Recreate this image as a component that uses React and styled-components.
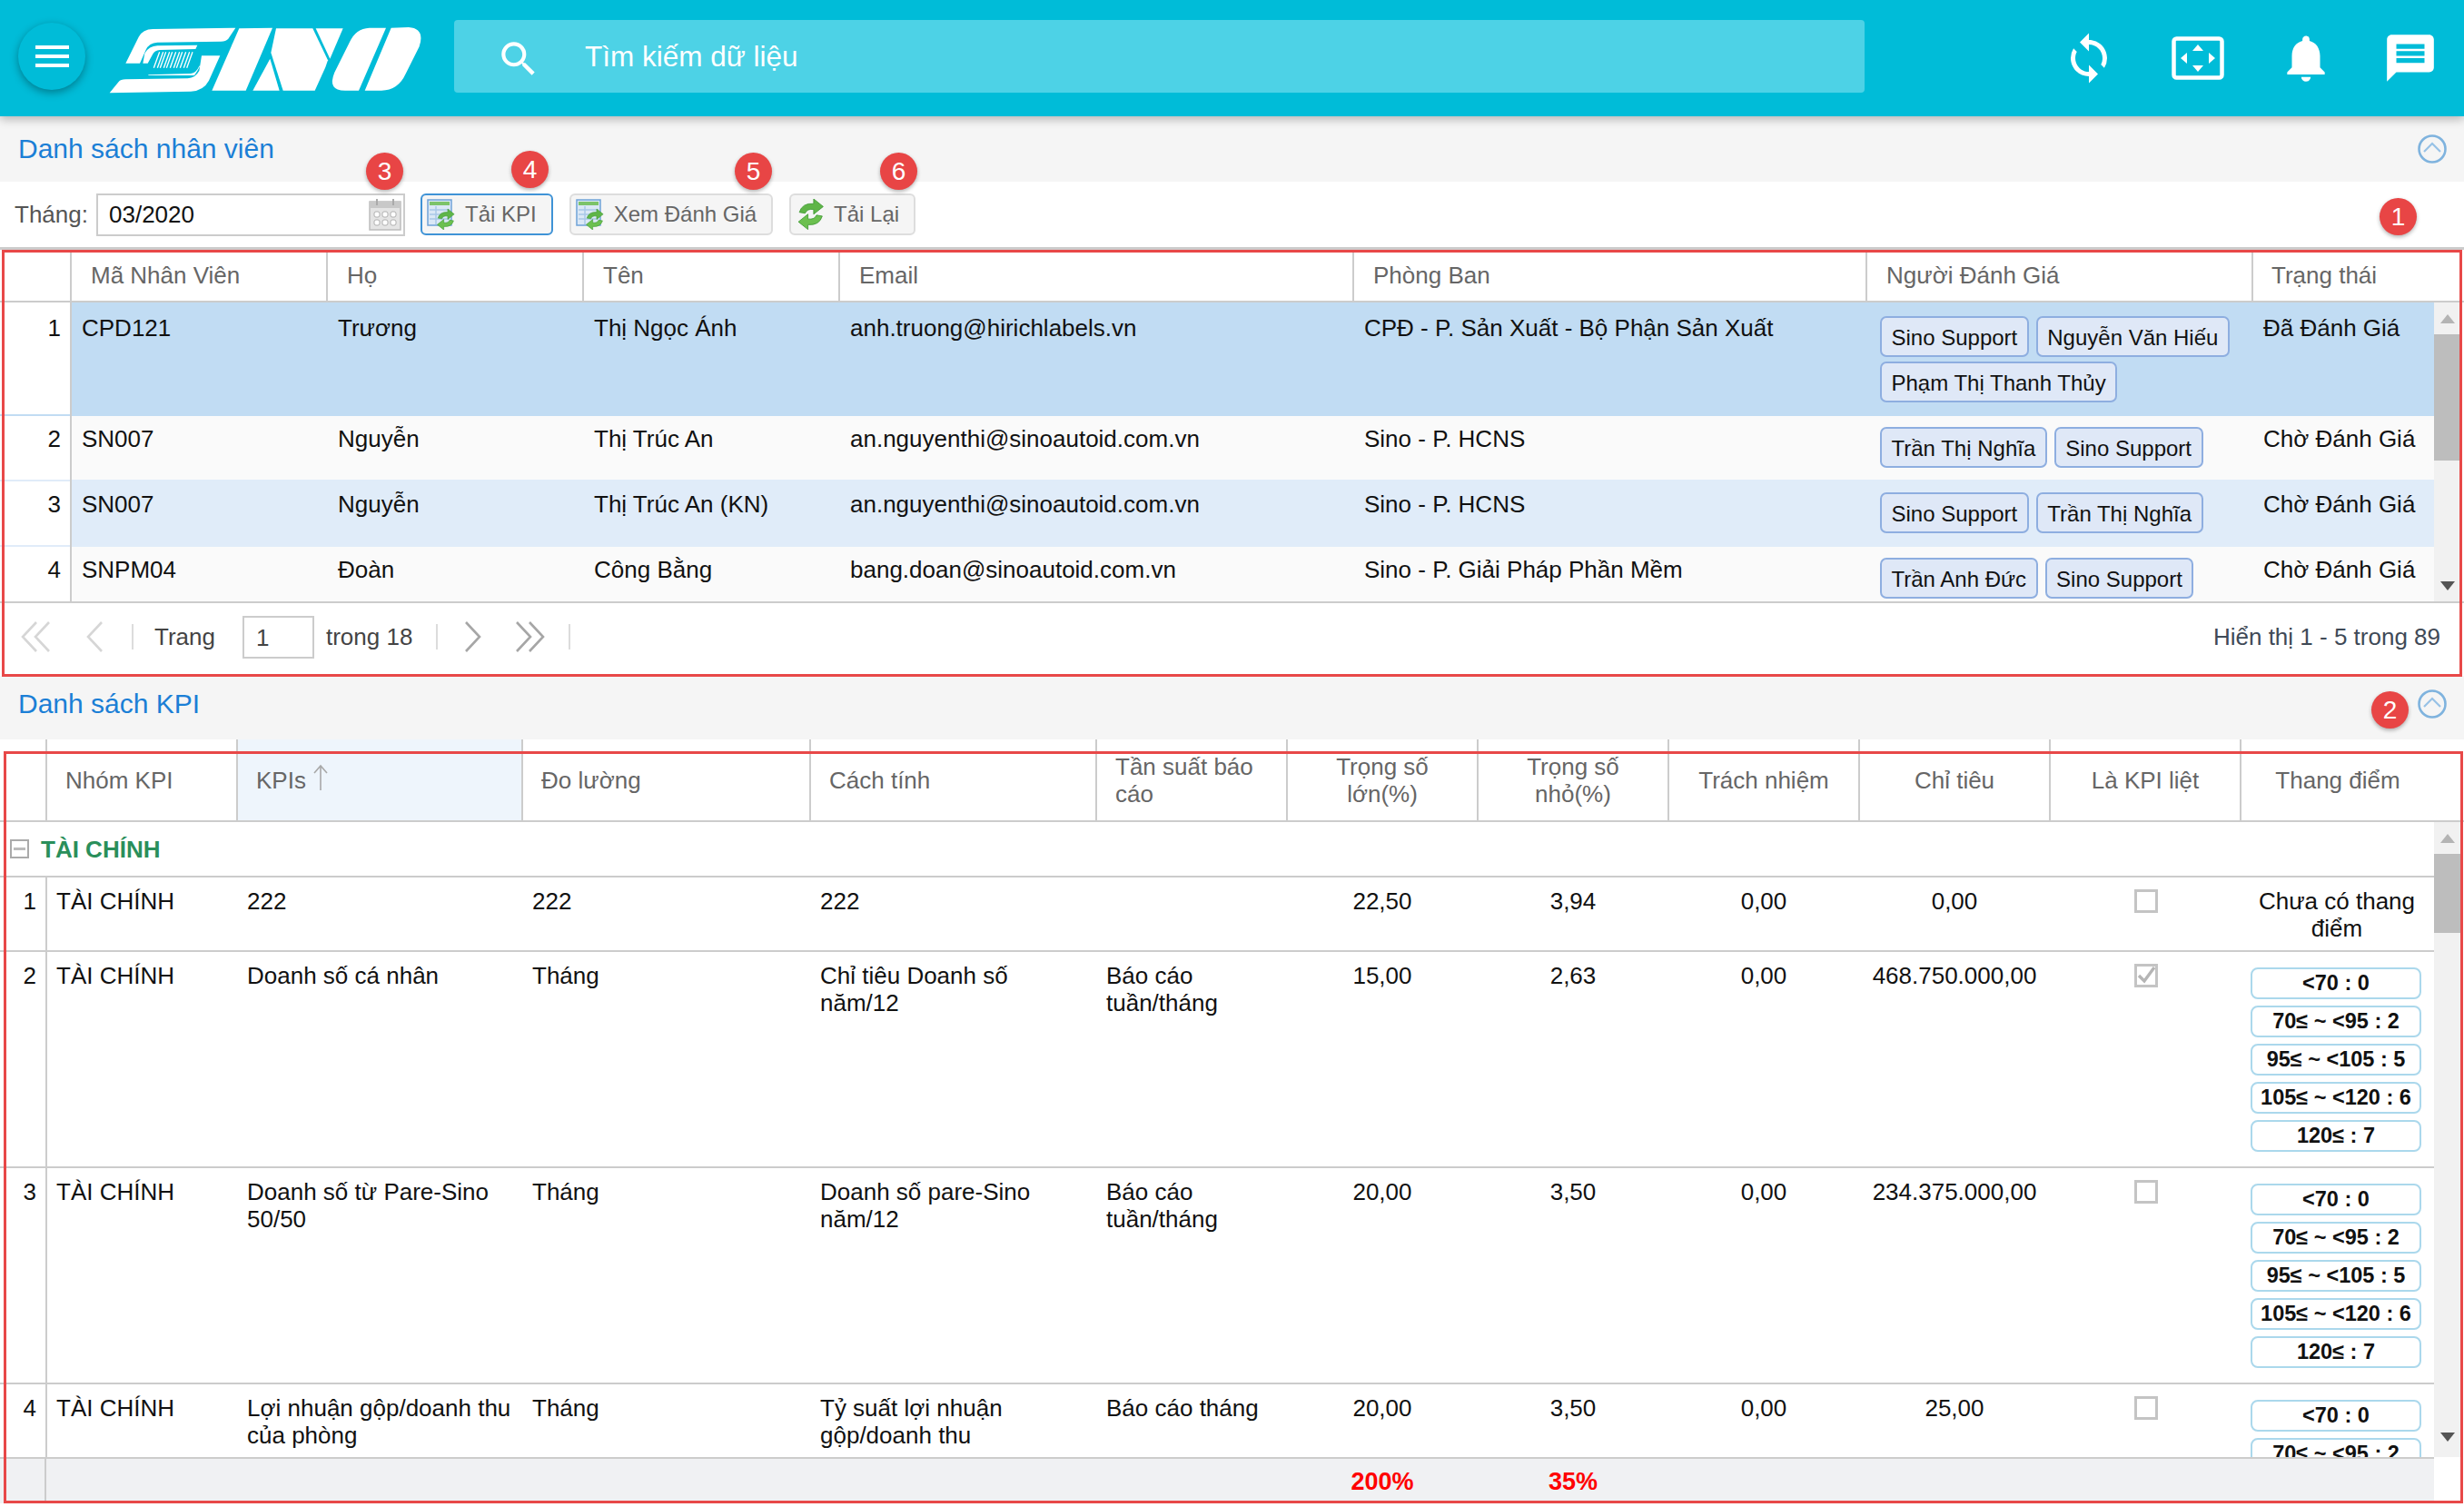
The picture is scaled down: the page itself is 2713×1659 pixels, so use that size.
import React from 'react';
import styled, { createGlobalStyle } from 'styled-components';
import { MdSync, MdNotifications, MdMessage, MdSearch } from 'react-icons/md';

const employees = [
  { no: 1, code: 'CPD121', last: 'Trương', first: 'Thị Ngọc Ánh', email: 'anh.truong@hirichlabels.vn', dept: 'CPĐ - P. Sản Xuất - Bộ Phận Sản Xuất', raters: ['Sino Support', 'Nguyễn Văn Hiếu', 'Phạm Thị Thanh Thủy'], status: 'Đã Đánh Giá', h: 125, pad: 15, bg: '#c1dcf3', textTop: 13, edge: 'inset 0 -2px 0 #c1dcf3' },
  { no: 2, code: 'SN007', last: 'Nguyễn', first: 'Thị Trúc An', email: 'an.nguyenthi@sinoautoid.com.vn', dept: 'Sino - P. HCNS', raters: ['Trần Thị Nghĩa', 'Sino Support'], status: 'Chờ Đánh Giá', h: 70, pad: 12, bg: '#fafafa', textTop: 10, edge: 'none' },
  { no: 3, code: 'SN007', last: 'Nguyễn', first: 'Thị Trúc An (KN)', email: 'an.nguyenthi@sinoautoid.com.vn', dept: 'Sino - P. HCNS', raters: ['Sino Support', 'Trần Thị Nghĩa'], status: 'Chờ Đánh Giá', h: 74, pad: 14, bg: '#e0ecf9', textTop: 12, edge: 'inset 0 2px 0 #e0ecf9, inset 0 -2px 0 #e0ecf9' },
  { no: 4, code: 'SNPM04', last: 'Đoàn', first: 'Công Bằng', email: 'bang.doan@sinoautoid.com.vn', dept: 'Sino - P. Giải Pháp Phần Mềm', raters: ['Trần Anh Đức', 'Sino Support'], status: 'Chờ Đánh Giá', h: 70, pad: 12, bg: '#fafafa', textTop: 10, edge: 'none' },
];

const scale = ['<70 : 0', '70≤ ~ <95 : 2', '95≤ ~ <105 : 5', '105≤ ~ <120 : 6', '120≤ : 7'];

const kpis = [
  { no: 1, kpi: '222', unit: '222', calc: '222', freq: '', big: '22,50', small: '3,94', duty: '0,00', target: '0,00', checked: false, h: 82, pills: null },
  { no: 2, kpi: 'Doanh số cá nhân', unit: 'Tháng', calc: 'Chỉ tiêu Doanh số năm/12', freq: 'Báo cáo tuần/tháng', big: '15,00', small: '2,63', duty: '0,00', target: '468.750.000,00', checked: true, h: 238, pills: scale },
  { no: 3, kpi: 'Doanh số từ Pare-Sino 50/50', unit: 'Tháng', calc: 'Doanh số pare-Sino năm/12', freq: 'Báo cáo tuần/tháng', big: '20,00', small: '3,50', duty: '0,00', target: '234.375.000,00', checked: false, h: 238, pills: scale },
  { no: 4, kpi: 'Lợi nhuận gộp/doanh thu của phòng', unit: 'Tháng', calc: 'Tỷ suất lợi nhuận gộp/doanh thu', freq: 'Báo cáo tháng', big: '20,00', small: '3,50', duty: '0,00', target: '25,00', checked: false, h: 200, pills: scale },
];

function Logo() {
  return (
    <LogoSvg viewBox="330 40 1035 225">
      <g fill="#fff">
        <path d="M385 165 L428 78 Q442 52 475 52 L748 48 L724 84 Q716 93 700 93 L490 96 Q462 98 452 120 L432 165 Z" />
        <path d="M448 132 Q462 108 490 107 L622 105 L616 118 L498 121 Q480 122 474 136 L458 165 L442 165 Z" />
        <path d="M458 203 L600 199 Q618 197 628 174 L632 172 L622 190 L612 205 L462 205 Z" />
        <path d="M636 140 L697 140 L660 222 Q642 256 600 258 L332 263 L362 226 Q368 218 385 218 L590 215 Q616 213 628 190 Z" />
        <path d="M760 50 L870 48 L782 255 L670 255 Z" />
        <path d="M882 50 L1003 50 L1053 155 L1045 178 L1010 255 L905 255 L865 130 Z" />
        <path d="M1013 50 L1103 50 L1060 150 Z" />
        <path d="M805 255 L862 150 L893 255 Z" />
        <path d="M1245 48 L1190 48 Q1145 50 1125 95 L1075 195 Q1050 255 1110 255 L1155 255 Z" />
        <path d="M1262 48 L1320 46 Q1375 50 1355 110 L1310 200 Q1285 255 1230 255 L1175 255 Z" />
      </g>
      <g stroke="#fff" strokeWidth="4">
        <path d="M497 128 L478 180M509 128 L490 180M518 128 L499 180M530 128 L511 180M539 128 L520 180M551 128 L532 180M563 128 L544 180M572 128 L553 180M584 128 L565 180M596 128 L577 180M606 128 L587 180" />
      </g>
    </LogoSvg>
  );
}

function FullscreenIcon() {
  return (
    <svg width="58" height="48" viewBox="0 0 58 48">
      <rect x="2.5" y="2.5" width="53" height="43" rx="3" fill="none" stroke="#fff" strokeWidth="4.5" />
      <path d="M29 9 L35 16 L23 16 Z M29 39 L35 32 L23 32 Z M10 24 L17 18 L17 30 Z M48 24 L41 18 L41 30 Z" fill="#fff" />
    </svg>
  );
}

function CalendarIcon() {
  return (
    <svg width="36" height="36" viewBox="0 0 36 36">
      <rect x="1" y="4" width="34" height="31" fill="#e4e4e4" stroke="#bdbdbd" strokeWidth="1.5" />
      <rect x="1" y="4" width="34" height="7" fill="#c8c8c8" />
      <path d="M9 1 V8 M27 1 V8" stroke="#aaa" strokeWidth="2" />
      <g fill="#fff" stroke="#b0b0b0">
        {[6, 15, 24].map((x) => [15, 24].map((y) => <rect key={`${x}-${y}`} x={x} y={y} width="6" height="6" rx="2" />))}
      </g>
    </svg>
  );
}

function GreenArrows({ x = 0, y = 0, s = 1 }) {
  return (
    <g transform={`translate(${x} ${y}) scale(${s})`}>
      <path d="M3 14 Q6 4 18 5 L18 0 L28 8 L18 16 L18 11 Q11 10 9 15 Z" fill="#5fb548" stroke="#3f9a34" strokeWidth="0.8" />
      <path d="M27 18 Q24 28 12 27 L12 32 L2 24 L12 16 L12 21 Q19 22 21 17 Z" fill="#6cc04f" stroke="#3f9a34" strokeWidth="0.8" />
    </g>
  );
}

function TableIcon() {
  return (
    <svg width="34" height="34" viewBox="0 0 34 34">
      <rect x="1" y="1" width="26" height="28" fill="#dbe8f6" stroke="#6fa3d8" strokeWidth="1.5" />
      <rect x="3" y="3" width="22" height="4" fill="#7cc36a" />
      <path d="M3 12 H25 M3 17 H25 M3 22 H25 M10 8 V28" stroke="#a9c8e8" strokeWidth="1.5" />
      <GreenArrows x={10} y={11} s={0.72} />
    </svg>
  );
}

function ReloadIcon() {
  return (
    <svg width="34" height="34" viewBox="0 0 34 34">
      <GreenArrows x={1} y={0} s={1.05} />
    </svg>
  );
}

function CollapseIcon() {
  return (
    <svg width="32" height="32" viewBox="0 0 32 32">
      <circle cx="16" cy="16" r="14.5" fill="#f5f5f5" stroke="#7fb3de" strokeWidth="2.6" />
      <path d="M7 19 L16 10 L25 19" fill="none" stroke="#98c2e6" strokeWidth="2.2" />
    </svg>
  );
}

function Chevron({ dir, double, dark }) {
  const color = dark ? '#a6a6a6' : '#d6d6d6';
  const flip = dir === 'left' ? 'scale(-1 1) translate(-34 0)' : '';
  return (
    <svg width={double ? 34 : 20} height="34" viewBox={double ? '0 0 34 34' : '0 0 20 34'}>
      <g transform={double ? flip : dir === 'left' ? 'scale(-1 1) translate(-20 0)' : ''} fill="none" stroke={color} strokeWidth="2.6">
        <path d="M2 1 L17 17 L2 33" />
        {double && <path d="M16 1 L31 17 L16 33" />}
      </g>
    </svg>
  );
}

function Scrollbar({ thumb, last }) {
  return (
    <Track>
      <Arrow $up>
        <svg width="16" height="10" viewBox="0 0 16 10"><path d="M8 0 L16 10 L0 10 Z" fill="#b4b4b4" /></svg>
      </Arrow>
      <Thumb $h={thumb} />
      <TrackGap />
      <Arrow $h={last}>
        <svg width="16" height="10" viewBox="0 0 16 10"><path d="M8 10 L16 0 L0 0 Z" fill="#555" /></svg>
      </Arrow>
    </Track>
  );
}

function Tick({ checked }) {
  return (
    <CheckBox>
      {checked && (
        <svg width="20" height="20" viewBox="0 0 20 20"><path d="M2 10 L8 16 L19 1" fill="none" stroke="#b5b5b5" strokeWidth="3.4" /></svg>
      )}
    </CheckBox>
  );
}

function EmployeePanel() {
  return (
    <Panel>
      <EmpHead>
        <HeadCell />
        {['Mã Nhân Viên', 'Họ', 'Tên', 'Email', 'Phòng Ban', 'Người Đánh Giá', 'Trạng thái'].map((t) => <HeadCell key={t}>{t}</HeadCell>)}
      </EmpHead>
      <GridBody $h={329}>
        <RowClip>
          {employees.map((e) => (
            <EmpRow key={e.no} $h={e.h} $bg={e.bg}>
              <NumCell $top={e.textTop} $right={10} $edge={e.edge}>{e.no}</NumCell>
              <EmpCell $top={e.textTop}>{e.code}</EmpCell>
              <EmpCell $top={e.textTop}>{e.last}</EmpCell>
              <EmpCell $top={e.textTop}>{e.first}</EmpCell>
              <EmpCell $top={e.textTop}>{e.email}</EmpCell>
              <EmpCell $top={e.textTop}>{e.dept}</EmpCell>
              <TagCell $top={e.pad}>
                {e.raters.map((r) => <Tag key={r}>{r}</Tag>)}
              </TagCell>
              <EmpCell $top={e.textTop}>{e.status}</EmpCell>
            </EmpRow>
          ))}
        </RowClip>
        <Scrollbar thumb={139} last={35} />
      </GridBody>
      <Pager>
        <PagerBtn $w={79} $pad={23}><Chevron dir="left" double /></PagerBtn>
        <PagerBtn $w={35}><Chevron dir="left" /></PagerBtn>
        <PagerSep />
        <PagerText $left={23}>Trang</PagerText>
        <PageInput>1</PageInput>
        <PagerText $left={13}>trong 18</PagerText>
        <PagerSep $left={26} />
        <PagerBtn $w={49}><Chevron dir="right" dark /></PagerBtn>
        <PagerBtn $w={70}><Chevron dir="right" double dark /></PagerBtn>
        <PagerSep $left={25} />
        <PagerInfo>Hiển thị 1 - 5 trong 89</PagerInfo>
      </Pager>
      <FrameOne />
    </Panel>
  );
}

function KpiPanel() {
  return (
    <KpiWrap>
      <KpiHead>
        <KpiHeadCell />
        <KpiHeadCell>Nhóm KPI</KpiHeadCell>
        <KpiHeadCell $sorted>
          KPIs
          <SortArrow viewBox="0 0 16 30" width="16" height="30"><path d="M8 29 V2 M1 10 L8 2 L15 10" fill="none" stroke="#a8a8a8" strokeWidth="1.6" /></SortArrow>
        </KpiHeadCell>
        <KpiHeadCell>Đo lường</KpiHeadCell>
        <KpiHeadCell>Cách tính</KpiHeadCell>
        <KpiHeadCell>Tần suất báo cáo</KpiHeadCell>
        <KpiHeadCell $center>Trọng số lớn(%)</KpiHeadCell>
        <KpiHeadCell $center>Trọng số nhỏ(%)</KpiHeadCell>
        <KpiHeadCell $center>Trách nhiệm</KpiHeadCell>
        <KpiHeadCell $center>Chỉ tiêu</KpiHeadCell>
        <KpiHeadCell $center>Là KPI liệt</KpiHeadCell>
        <KpiHeadCell $center>Thang điểm</KpiHeadCell>
      </KpiHead>
      <GridBody $h={699}>
        <RowClip>
          <GroupRow>
            <MinusBox />
            <GroupName>TÀI CHÍNH</GroupName>
          </GroupRow>
          {kpis.map((k) => (
            <KpiRow key={k.no} $h={k.h}>
              <NumCell $top={11} $right={10}>{k.no}</NumCell>
              <KpiCell>TÀI CHÍNH</KpiCell>
              <KpiCell>{k.kpi}</KpiCell>
              <KpiCell>{k.unit}</KpiCell>
              <KpiCell>{k.calc}</KpiCell>
              <KpiCell>{k.freq}</KpiCell>
              <KpiCell $center>{k.big}</KpiCell>
              <KpiCell $center>{k.small}</KpiCell>
              <KpiCell $center>{k.duty}</KpiCell>
              <KpiCell $center>{k.target}</KpiCell>
              <KpiCell $center><Tick checked={k.checked} /></KpiCell>
              {k.pills ? (
                <PillCell>{k.pills.map((p) => <Pill key={p}>{p}</Pill>)}</PillCell>
              ) : (
                <KpiCell $center>Chưa có thang điểm</KpiCell>
              )}
            </KpiRow>
          ))}
        </RowClip>
        <Scrollbar thumb={87} last={45} />
      </GridBody>
      <KpiFoot>
        <FootCell $bar />
        <FootCell />
        <FootCell />
        <FootCell />
        <FootCell />
        <FootCell />
        <FootCell $red>200%</FootCell>
        <FootCell $red>35%</FootCell>
      </KpiFoot>
      <FrameTwo />
    </KpiWrap>
  );
}

export default function App() {
  return (
    <Page>
      <GlobalStyle />
      <TopBar>
        <MenuButton><MenuLine /><MenuLine /><MenuLine /></MenuButton>
        <Logo />
        <SearchBox>
          <SearchIcon size={50} color="#fff" />
          <SearchText>Tìm kiếm dữ liệu</SearchText>
        </SearchBox>
        <TopIcons>
          <IconSlot $w={114}><MdSync size={60} color="#fff" /></IconSlot>
          <IconSlot $w={126}><FullscreenIcon /></IconSlot>
          <IconSlot $w={112}><MdNotifications size={62} color="#fff" /></IconSlot>
          <IconSlot $w={118}><MdMessage size={62} color="#fff" /></IconSlot>
        </TopIcons>
      </TopBar>
      <TitleBar>
        <Title>Danh sách nhân viên</Title>
        <CollapseIcon />
      </TitleBar>
      <Toolbar>
        <MonthLabel>Tháng:</MonthLabel>
        <MonthInput>03/2020<CalendarIcon /></MonthInput>
        <ToolButton $active><TableIcon />Tải KPI</ToolButton>
        <ToolButton><TableIcon />Xem Đánh Giá</ToolButton>
        <ToolButton><ReloadIcon />Tải Lại</ToolButton>
      </Toolbar>
      <EmployeePanel />
      <TitleBar $second>
        <Title>Danh sách KPI</Title>
        <CollapseIcon />
      </TitleBar>
      <KpiPanel />
      <Badge $x={423} $y={188}>3</Badge>
      <Badge $x={583} $y={186}>4</Badge>
      <Badge $x={829} $y={188}>5</Badge>
      <Badge $x={989} $y={188}>6</Badge>
      <Badge $x={2640} $y={238}>1</Badge>
      <Badge $x={2631} $y={781}>2</Badge>
    </Page>
  );
}

const GlobalStyle = createGlobalStyle`
  * { box-sizing: border-box; }
  html, body { margin: 0; padding: 0; background: #fff; }
  body { font-family: "Liberation Sans", Arial, sans-serif; font-size: 26px; line-height: 30px; color: #111; }
`;

const Page = styled.div`
  position: relative;
  width: 2713px;
  height: 1659px;
  overflow: hidden;
`;

const TopBar = styled.header`
  position: relative;
  z-index: 2;
  display: flex;
  align-items: center;
  height: 128px;
  padding: 0 0 4px 20px;
  background: #00bcd8;
  box-shadow: 0 3px 10px rgba(0, 0, 0, 0.28);
`;

const MenuButton = styled.div`
  display: flex;
  flex-direction: column;
  align-items: center;
  justify-content: center;
  gap: 6px;
  width: 74px;
  height: 74px;
  border-radius: 50%;
  background: #00bcd8;
  box-shadow: 0 3px 10px rgba(0, 0, 0, 0.35);
`;

const MenuLine = styled.span`
  width: 37px;
  height: 4px;
  background: #fff;
`;

const LogoSvg = styled.svg`
  width: 345px;
  height: 75px;
  margin: 7px 0 0 26px;
`;

const SearchBox = styled.div`
  display: flex;
  align-items: center;
  width: 1553px;
  height: 80px;
  margin-left: 35px;
  padding-left: 46px;
  border-radius: 4px;
  background: #4dd2e6;
`;

const SearchIcon = styled(MdSearch)`
  margin-top: 6px;
`;

const SearchText = styled.span`
  margin-left: 48px;
  color: #fff;
  font-size: 31.5px;
`;

const TopIcons = styled.div`
  display: flex;
  margin: 4px 0 0 auto;
`;

const IconSlot = styled.div`
  display: flex;
  align-items: center;
  justify-content: center;
  width: ${(p) => p.$w}px;
`;

const TitleBar = styled.div`
  display: flex;
  align-items: center;
  justify-content: space-between;
  height: ${(p) => (p.$second ? '70px' : '72px')};
  padding: ${(p) => (p.$second ? '0 19px 8px 20px' : '0 19px 0 20px')};
  background: #f5f5f5;
`;

const Title = styled.div`
  color: #1b7fd6;
  font-size: 30px;
`;

const Toolbar = styled.div`
  display: flex;
  align-items: center;
  height: 75px;
  padding-left: 16px;
  border-bottom: 3px solid #ccc;
`;

const MonthLabel = styled.span`
  width: 90px;
  color: #555;
`;

const MonthInput = styled.div`
  display: flex;
  align-items: center;
  justify-content: space-between;
  width: 340px;
  height: 47px;
  margin-right: 17px;
  padding: 0 2px 0 12px;
  border: 2px solid #ccc;
`;

const ToolButton = styled.div`
  display: flex;
  align-items: center;
  gap: 8px;
  height: 46px;
  margin-right: 18px;
  padding: 0 16px 0 5px;
  border: 2px solid ${(p) => (p.$active ? '#3f93d6' : '#ddd')};
  border-radius: 6px;
  background: #f5f5f5;
  color: #666;
  font-size: 24px;
`;

const Panel = styled.section`
  position: relative;
  height: 469px;
`;

const EmpHead = styled.div`
  display: grid;
  grid-template-columns: 79px 282px 282px 282px 566px 565px 425px 1fr;
  height: 58px;
  border-bottom: 2px solid #ccc;
`;

const HeadCell = styled.div`
  padding: 13px 0 0 21px;
  border-right: 2px solid #ccc;
  color: #666;
  &:last-child { border-right: 0; padding-left: 20px; }
`;

const GridBody = styled.div`
  display: flex;
  height: ${(p) => p.$h}px;
`;

const RowClip = styled.div`
  width: 2680px;
  overflow: hidden;
`;

const EmpRow = styled.div`
  display: grid;
  grid-template-columns: 79px 282px 282px 282px 566px 565px 425px 199px;
  height: ${(p) => p.$h}px;
  background: ${(p) => p.$bg};
`;

const NumCell = styled.div`
  padding: ${(p) => p.$top}px ${(p) => p.$right}px 0 0;
  border-right: 2px solid #ccc;
  background: #fff;
  box-shadow: ${(p) => p.$edge || 'none'};
  text-align: right;
`;

const EmpCell = styled.div`
  padding: ${(p) => p.$top}px 11px 0;
`;

const TagCell = styled.div`
  display: flex;
  flex-wrap: wrap;
  align-content: flex-start;
  gap: 5px 8px;
  padding: ${(p) => p.$top}px 11px 0 14px;
`;

const Tag = styled.span`
  height: 45px;
  padding: 0 10.5px;
  border: 2px solid #8eaee0;
  border-radius: 7px;
  background: #dfe8f7;
  font-size: 24px;
  line-height: 44px;
`;

const Track = styled.div`
  display: flex;
  flex-direction: column;
  width: 30px;
  background: #f1f1f1;
`;

const Arrow = styled.div`
  display: flex;
  align-items: center;
  justify-content: center;
  flex: none;
  height: ${(p) => (p.$up ? 35 : p.$h)}px;
`;

const Thumb = styled.div`
  flex: none;
  height: ${(p) => p.$h}px;
  background: #bdbdbd;
`;

const TrackGap = styled.div`
  flex: 1;
`;

const Pager = styled.div`
  display: flex;
  align-items: center;
  height: 80px;
  padding-bottom: 4px;
  border-top: 2px solid #ccc;
  color: #444;
`;

const PagerBtn = styled.div`
  display: flex;
  align-items: center;
  justify-content: flex-end;
  width: ${(p) => p.$w}px;
  padding-right: ${(p) => p.$pad || 0}px;
`;

const PagerSep = styled.span`
  width: 2px;
  height: 28px;
  margin-left: ${(p) => p.$left || 31}px;
  background: #dcdcdc;
`;

const PagerText = styled.span`
  margin-left: ${(p) => p.$left}px;
`;

const PageInput = styled.div`
  width: 79px;
  height: 47px;
  margin-left: 30px;
  padding: 7px 0 0 13px;
  border: 2px solid #ccc;
`;

const PagerInfo = styled.span`
  margin-left: auto;
  padding-right: 26px;
  color: #3f4a57;
`;

const Frame = styled.div`
  position: absolute;
  border: 3px solid #e84848;
  pointer-events: none;
`;

const FrameOne = styled(Frame)`
  top: 0;
  right: 2px;
  bottom: -1px;
  left: 2px;
`;

const KpiWrap = styled.section`
  position: relative;
  height: 845px;
`;

const FrameTwo = styled(Frame)`
  top: 13px;
  right: 1px;
  bottom: 4px;
  left: 4px;
`;

const KpiHead = styled.div`
  display: grid;
  grid-template-columns: 52px 210px 314px 317px 315px 210px 210px 210px 210px 210px 210px 1fr;
  height: 91px;
  border-bottom: 2px solid #ccc;
`;

const KpiHeadCell = styled.div`
  display: flex;
  align-items: center;
  justify-content: ${(p) => (p.$center ? 'center' : 'flex-start')};
  padding: 0 20px;
  border-right: 2px solid #ccc;
  background: ${(p) => (p.$sorted ? '#eef5fc' : '#fff')};
  color: #666;
  text-align: ${(p) => (p.$center ? 'center' : 'left')};
  &:last-child { border-right: 0; padding-right: 53px; }
`;

const SortArrow = styled.svg`
  margin: 0 0 5px 8px;
`;

const GroupRow = styled.div`
  display: flex;
  align-items: center;
  height: 61px;
  padding-left: 11px;
  border-bottom: 2px solid #ccc;
`;

const MinusBox = styled.span`
  display: flex;
  align-items: center;
  justify-content: center;
  width: 21px;
  height: 21px;
  border: 2px solid #aaa;
  &::after { content: ""; width: 13px; height: 3px; background: #bbb; }
`;

const GroupName = styled.span`
  margin-left: 13px;
  color: #2a8f5b;
  font-weight: 700;
`;

const KpiRow = styled.div`
  display: grid;
  grid-template-columns: 52px 210px 314px 317px 315px 210px 210px 210px 210px 210px 210px 212px;
  height: ${(p) => p.$h}px;
  border-bottom: 2px solid #ccc;
`;

const KpiCell = styled.div`
  display: ${(p) => (p.$center ? 'flex' : 'block')};
  justify-content: center;
  padding: 11px 12px 0 10px;
  text-align: ${(p) => (p.$center ? 'center' : 'left')};
`;

const CheckBox = styled.span`
  display: flex;
  align-items: center;
  justify-content: center;
  width: 26px;
  height: 26px;
  margin: 2px 0 0 2px;
  border: 3px solid #c4c4c4;
`;

const PillCell = styled.div`
  display: flex;
  flex-direction: column;
  gap: 7px;
  padding: 17px 14px 0 10px;
`;

const Pill = styled.div`
  flex: none;
  height: 35px;
  border: 2px solid #abd8ec;
  border-radius: 8px;
  font-size: 23.5px;
  font-weight: 700;
  line-height: 31px;
  text-align: center;
`;

const KpiFoot = styled.div`
  display: grid;
  grid-template-columns: 51px 210px 314px 317px 315px 210px 210px 210px;
  width: 2680px;
  height: 51px;
  border-top: 2px solid #ccc;
  background: #f0f1f3;
`;

const FootCell = styled.div`
  padding-top: 10px;
  border-right: ${(p) => (p.$bar ? '2px solid #ccc' : '0')};
  color: #f00;
  font-size: 27px;
  font-weight: 700;
  text-align: center;
`;

const Badge = styled.span`
  position: absolute;
  z-index: 3;
  top: ${(p) => p.$y - 20}px;
  left: ${(p) => p.$x - 20}px;
  width: 41px;
  height: 41px;
  border-radius: 50%;
  background: #e84545;
  box-shadow: 0 2px 4px rgba(0, 0, 0, 0.3);
  color: #fff;
  font-size: 28px;
  line-height: 41px;
  text-align: center;
`;
